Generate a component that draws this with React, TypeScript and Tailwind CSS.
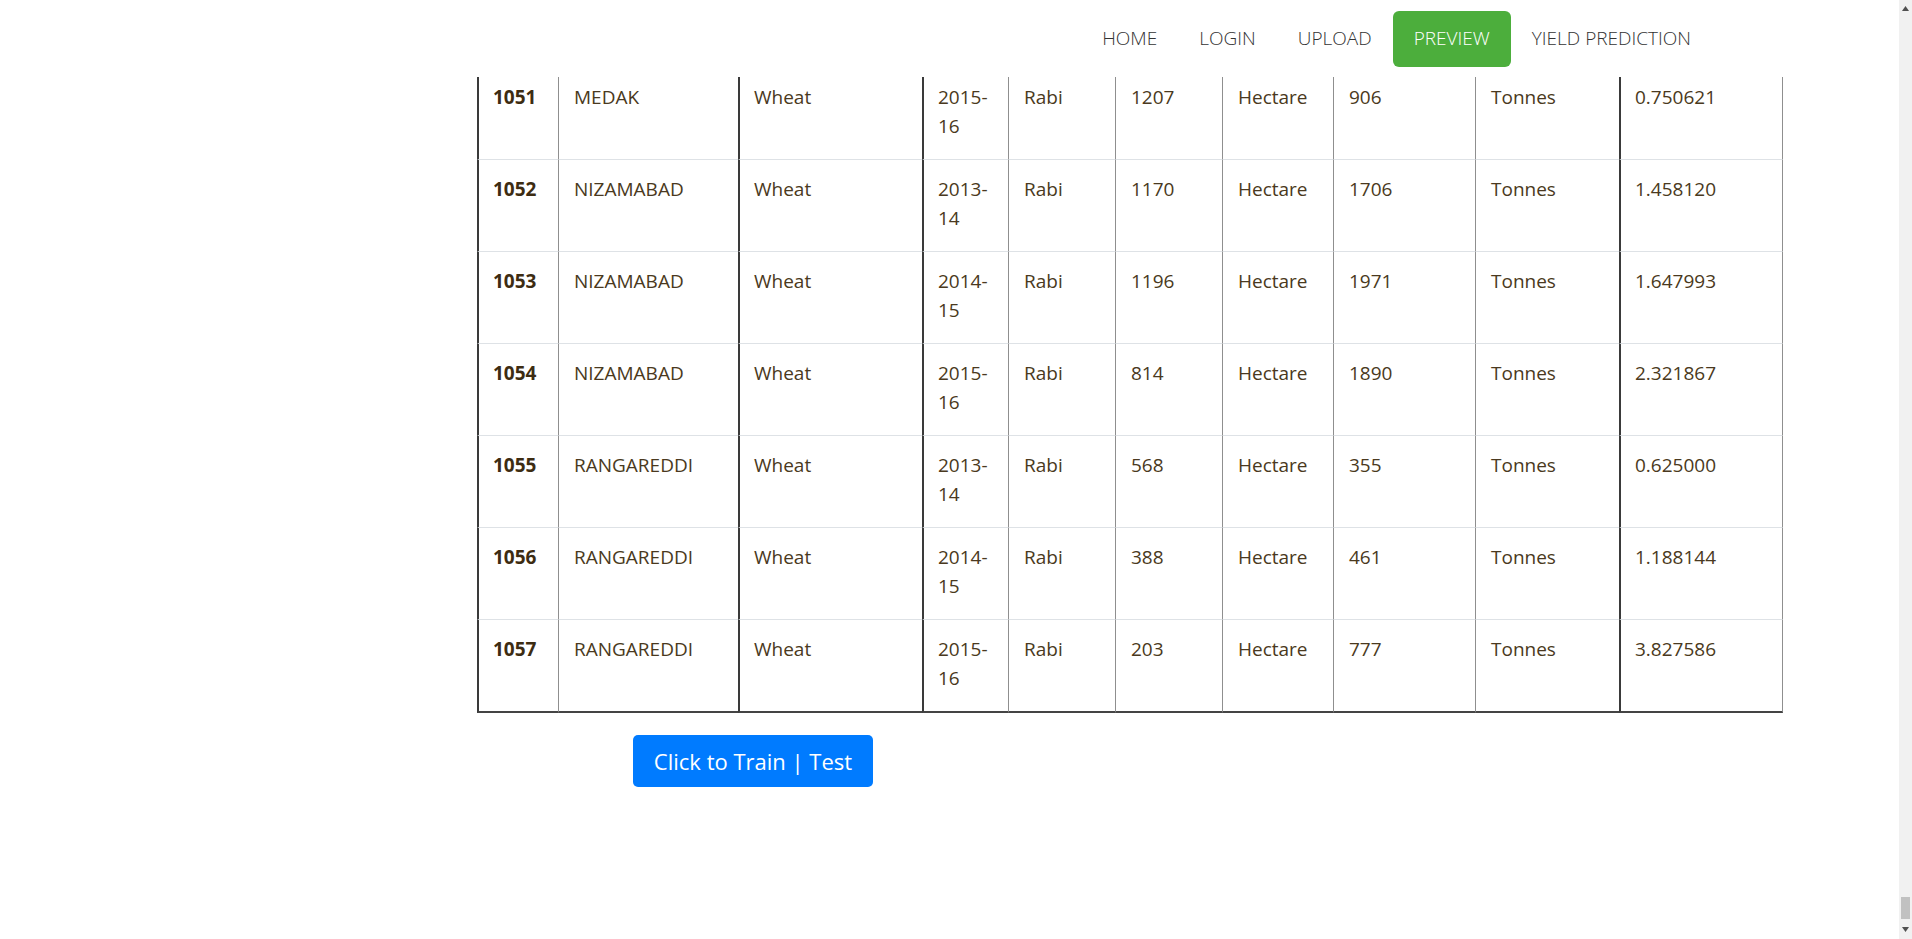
import React from "react";

type Row = [string, string, string, string, string, string, string, string, string, string];

const rows: Row[] = [
  ["1051", "MEDAK", "Wheat", "2015-16", "Rabi", "1207", "Hectare", "906", "Tonnes", "0.750621"],
  ["1052", "NIZAMABAD", "Wheat", "2013-14", "Rabi", "1170", "Hectare", "1706", "Tonnes", "1.458120"],
  ["1053", "NIZAMABAD", "Wheat", "2014-15", "Rabi", "1196", "Hectare", "1971", "Tonnes", "1.647993"],
  ["1054", "NIZAMABAD", "Wheat", "2015-16", "Rabi", "814", "Hectare", "1890", "Tonnes", "2.321867"],
  ["1055", "RANGAREDDI", "Wheat", "2013-14", "Rabi", "568", "Hectare", "355", "Tonnes", "0.625000"],
  ["1056", "RANGAREDDI", "Wheat", "2014-15", "Rabi", "388", "Hectare", "461", "Tonnes", "1.188144"],
  ["1057", "RANGAREDDI", "Wheat", "2015-16", "Rabi", "203", "Hectare", "777", "Tonnes", "3.827586"],
];

// left rule of each column: some render dark, some mid grey
const dark = "border-l-2 border-l-[#3a3a3a] pl-[14px]";
const grey = "border-l border-l-[#8f8f8f] pl-[15px]";
const colLines = [dark, grey, dark, dark, grey, grey, grey, grey, grey, dark];

const navItems = ["HOME", "LOGIN", "UPLOAD", "PREVIEW", "YIELD PREDICTION"];

function Navbar() {
  return (
    <header className="h-[77px] flex items-center justify-end pr-[187px] bg-white">
      {navItems.map((item) =>
        item === "PREVIEW" ? (
          <a
            key={item}
            href="#"
            className="h-[56px] flex items-center px-[21px] rounded-[6px] bg-[#4cae3c] text-white text-[19px] font-light"
          >
            {item}
          </a>
        ) : (
          <a key={item} href="#" className="px-[21px] text-[19px] font-light text-[#333]">
            {item}
          </a>
        )
      )}
    </header>
  );
}

function DataTable() {
  return (
    <div className="overflow-hidden">
      <div className="pl-[477px] -mt-[10px]">
        <div className="grid grid-cols-[81px_180px_184px_86px_107px_107px_111px_142px_144px_164px] w-[1306px] text-[19px] leading-[29px] text-[#4a3920]">
          {rows.map((r, ri) =>
            r.map((cell, ci) => (
              <div
                key={`${ri}-${ci}`}
                className={`pt-[15px] pr-[15px] border-t border-t-[#dee2e6] ${colLines[ci]} ${
                  ci === 9 ? "border-r border-r-[#8f8f8f]" : ""
                } ${ri === rows.length - 1 ? "h-[94px] border-b-2 border-b-[#444]" : "h-[92px]"} ${
                  ci === 0 ? "font-bold text-[#3d2c12]" : ""
                }`}
              >
                {cell}
              </div>
            ))
          )}
        </div>
      </div>
    </div>
  );
}

function Scrollbar() {
  return (
    <div className="w-[13px] bg-[#f1f1f1] flex flex-col">
      <div className="h-[17px] flex items-center justify-center">
        <svg width="7" height="5" viewBox="0 0 7 5">
          <polygon points="3.5,0 7,5 0,5" fill="#505050" />
        </svg>
      </div>
      <div className="flex-1" />
      <div className="h-[22px] mx-[2px] bg-[#c1c1c1]" />
      <div className="h-[20px] flex items-center justify-center">
        <svg width="7" height="5" viewBox="0 0 7 5">
          <polygon points="0,0 7,0 3.5,5" fill="#505050" />
        </svg>
      </div>
    </div>
  );
}

export default function App() {
  return (
    <div className="flex h-[939px] w-full overflow-hidden bg-white font-['Open_Sans',sans-serif]">
      <div className="flex-1 flex flex-col">
        <Navbar />
        <DataTable />
        <div className="pl-[633px] pt-[22px]">
          <button className="w-[240px] h-[52px] rounded-[5px] bg-[#007bff] text-white text-[22px]">
            Click to Train | Test
          </button>
        </div>
      </div>
      <Scrollbar />
    </div>
  );
}
